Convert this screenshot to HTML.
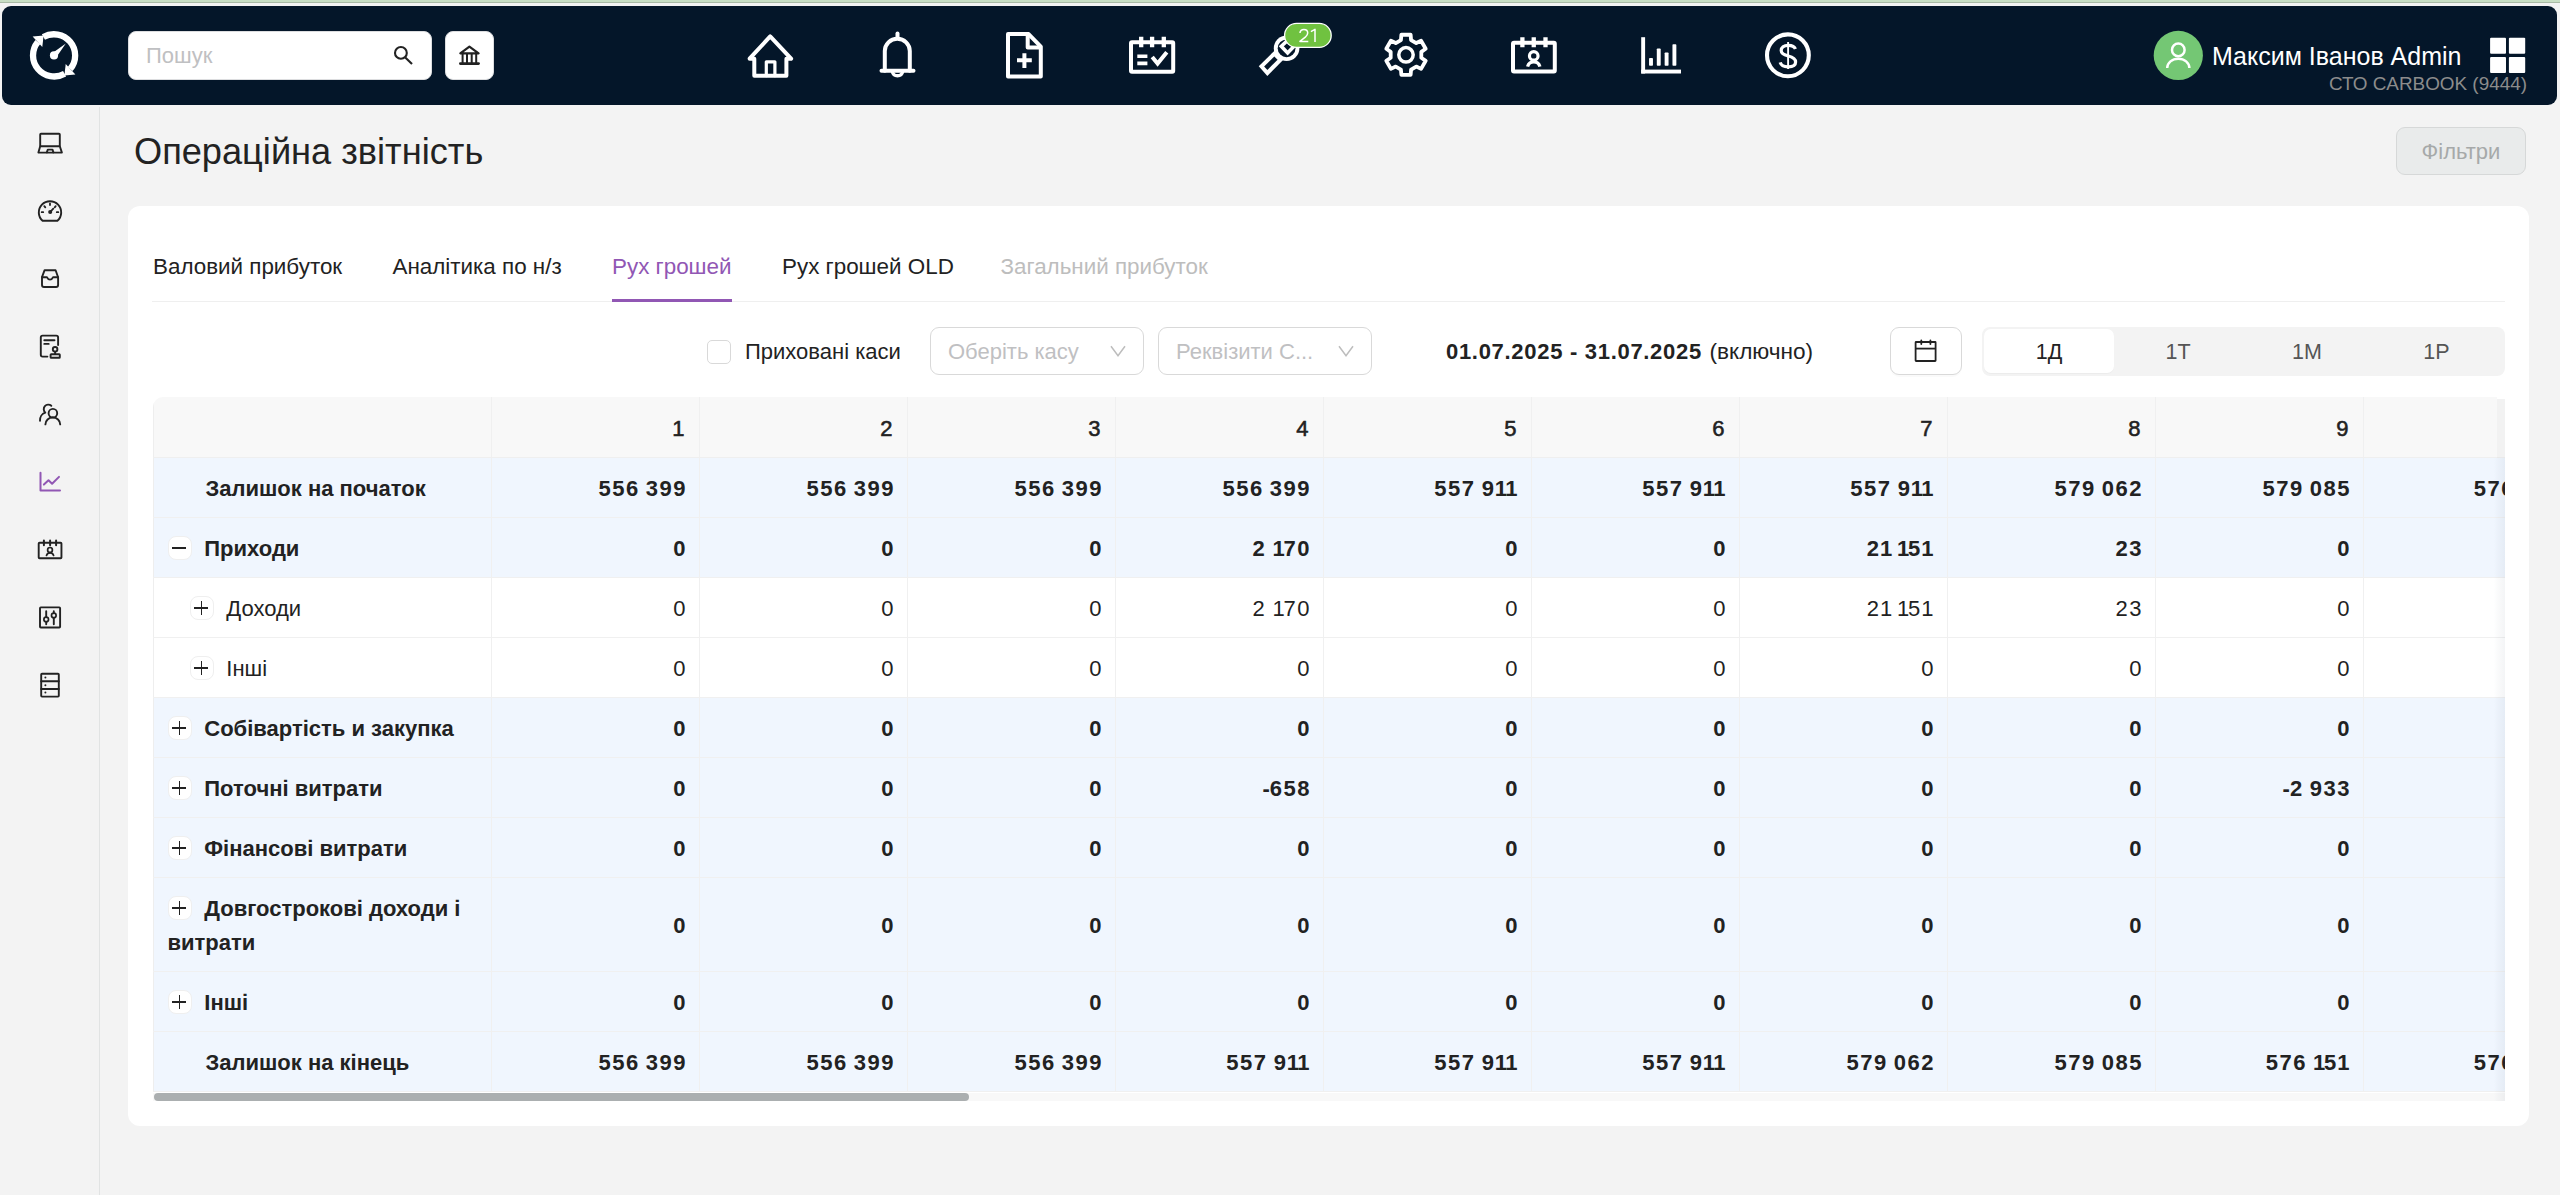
<!DOCTYPE html>
<html lang="uk">
<head>
<meta charset="utf-8">
<title>Операційна звітність</title>
<style>
*{box-sizing:border-box;margin:0;padding:0}
html,body{width:2560px;height:1195px;overflow:hidden}
body{position:relative;background:#f3f3f3;font-family:"Liberation Sans",sans-serif;color:#222;}
.abs{position:absolute}
.t{position:absolute;white-space:nowrap;line-height:1}
#topline{left:0;top:0;width:2560px;height:3px;background:#c8dec4;border-bottom:1px solid #a9baa6}
#nav{left:1.6px;top:6px;width:2555.2px;height:98.7px;background:#041629;border-radius:9px}
#search{left:128px;top:31px;width:304px;height:49px;background:#fff;border-radius:8px;border:1px solid #dcdddf}
#bankbtn{left:445px;top:31px;width:49px;height:49px;background:#fff;border-radius:8px;border:1px solid #dcdddf}
#sidebar-line{left:99px;top:107px;width:1px;height:1088px;background:#e1e3e3}
#filters{left:2396px;top:127px;width:130px;height:48px;background:#e9ebeb;border:1px solid #d6d8d8;border-radius:9px;color:#a6a9a9;font-size:22px;line-height:48px;text-align:center}
#card{left:128px;top:206px;width:2401px;height:920px;background:#fff;border-radius:12px}

.tab{top:256px;font-size:22.4px;color:#222}
.flt{top:340.8px;font-size:22px;color:#222}
.sel{top:327px;width:214.5px;height:48px;border:1.3px solid #d9d9d9;border-radius:9px;background:#fff}
.seg{top:341.7px;font-size:21.5px;color:#555;text-align:center}
#tbl{left:152.5px;top:397px;width:2352.5px;height:704px;overflow:hidden;border-radius:10px 0 0 0}
.hdr{position:absolute;left:0;top:0;height:61px;width:2420px;background:#f8f8f8;border-bottom:1px solid #efefef;display:flex}
.row{position:absolute;left:0;width:2420px;display:flex;border-bottom:1px solid #f0f0f0}
.row.blue{background:#f0f6fe}
.row.white{background:#fff}
.c0{width:339.5px;flex:none;border-right:1px solid #f0f0f0;border-left:1px solid #eeeeee;font-size:22px;line-height:34px;padding-top:14px;padding-right:14px;white-space:normal}
.cn{width:208px;flex:none;border-right:1px solid #f0f0f0;font-size:22px;text-align:right;padding-right:13.5px;display:flex;align-items:center;justify-content:flex-end}
.hdr .cn{font-weight:normal;-webkit-text-stroke:0.55px #222;padding-top:3px;padding-right:14.5px}
.row .cn{padding-top:2px}
.row.b{font-weight:bold}
.row.r{font-weight:normal}
.xb{display:inline-block;position:relative;width:24px;height:23.5px;background:#fff;border:1.3px solid #efefef;border-radius:8px;vertical-align:top;margin-top:4.3px;margin-right:12.8px}
.xb .mh{position:absolute;left:3.8px;top:9.7px;width:13.8px;height:1.9px;background:#222}
.xb .mv{position:absolute;left:10px;top:4.1px;width:1.9px;height:13.9px;background:#222}
.cn i{font-style:normal}.cn .a{letter-spacing:1.5px}.cn .b{letter-spacing:-1.2px}.cn .c{letter-spacing:0.9px}.cn .d{letter-spacing:-1.8px}
</style>
</head>
<body>
<div id="topline" class="abs"></div>
<div id="nav" class="abs"></div>
<div id="search" class="abs"></div>
<div id="bankbtn" class="abs"></div>
<div class="t" style="left:146px;top:45px;font-size:22px;color:#bfc0c2">Пошук</div>

<!-- NAV ICONS -->
<svg class="abs" style="left:0;top:0" width="2560" height="110" viewBox="0 0 2560 110" fill="none">
  <!-- logo -->
  <g stroke="#fff" stroke-width="6.3" fill="none">
    <path d="M64.6,73.7 A21.15,21.15 0 0 1 37.8,41.9" />
    <path d="M43.4,37.1 A21.15,21.15 0 0 1 70.2,69.0" />
  </g>
  <polygon fill="#fff" points="32.6,36.4 43.6,35.6 42.3,47" />
  <polygon fill="#fff" points="75.4,74.6 64.4,75.4 65.7,64" />
  <polygon fill="#fff" points="65.8,43.6 56.2,57.6 51.8,53.4" />
  <circle cx="54" cy="55.4" r="4.1" fill="#fff"/>

  <!-- search icon -->
  <g stroke="#222" stroke-width="2.1" fill="none">
    <circle cx="400.9" cy="52.9" r="5.9"/>
    <path d="M405.3,57.4 L412,64.1"/>
  </g>
  <!-- bank icon -->
  <g stroke="#222" fill="none">
    <path d="M460.3,53.3 L469.4,46.6 L478.6,53.3 Z" stroke-width="2.2" stroke-linejoin="round"/>
    <path d="M462.6,54 V63 M467,54 V63 M471.7,54 V63 M476.2,54 V63" stroke-width="2"/>
    <path d="M460.3,63.6 H478.6" stroke-width="2.6" stroke-linecap="round"/>
  </g>

  <!-- home -->
  <g stroke="#fff" stroke-width="4" fill="none" stroke-linejoin="round" stroke-linecap="round">
    <path d="M754.3,58.7 H749.6 L770.2,36.4 L791.1,58.7 H786.4 V75.7 H754.3 Z"/>
    <path d="M766.3,75.7 V61.8 H774.9 V75.7" stroke-width="3.2"/>
  </g>
  <!-- bell -->
  <g stroke="#fff" stroke-width="4" fill="none" stroke-linecap="round">
    <path d="M897.5,33.5 V37"/>
    <path d="M884.8,70.8 V51 A12.5,12.3 0 0 1 909.8,51 V70.8"/>
    <path d="M881.5,70.8 H913.5"/>
    <path d="M892.3,71.5 A5.3,5.3 0 0 0 902.7,71.5" stroke-width="3.4"/>
  </g>
  <!-- doc plus -->
  <g stroke="#fff" stroke-width="4" fill="none" stroke-linejoin="round">
    <path d="M1008,34.1 H1028.6 L1040.8,46.6 V76.6 H1008 Z"/>
    <path d="M1027.7,34.5 V47.4 H1040.5"/>
    <path d="M1017,60.2 H1031.8 M1024.4,53.2 V68"/>
  </g>
  <!-- calendar check -->
  <g stroke="#fff" stroke-width="4" fill="none">
    <rect x="1131" y="42.3" width="42.2" height="29.5" rx="1"/>
    <path d="M1141.2,36.8 V47.3 M1152.1,36.8 V47.3 M1163.8,36.8 V47.3" stroke-width="4.3"/>
    <path d="M1137.3,56.3 H1147.4 M1137.3,63.4 H1147.4" stroke-width="3.6"/>
    <path d="M1152.2,56.9 L1157.6,63.6 L1166.8,52.2" stroke-width="4"/>
  </g>
  <!-- wrench -->
  <g fill="#fff">
    <circle cx="1286.6" cy="48.3" r="12.8"/>
    <polygon points="1258.75,66.2 1267.3,75.9 1283.6,59.6 1275,50.2"/>
  </g>
  <g fill="#041629">
    <circle cx="1286.6" cy="48.3" r="8.9"/>
    <polygon points="1264.1,66.6 1267.4,69.9 1277.6,59.8 1274.3,56.4"/>
  </g>
  <path d="M1281.3,46.3 L1287.5,40.4 L1293.8,46.6 L1287.6,52.9 Z" stroke="#fff" stroke-width="3.6" fill="none"/>
  <!-- badge -->
  <rect x="1284.6" y="23.4" width="46.6" height="24" rx="12" fill="#70c240" stroke="#fff" stroke-width="1.3"/>
  <g stroke="#fff" stroke-width="1.5" fill="none" stroke-linejoin="round">
    <path d="M1300,33.1 C1300,30.8 1301.7,29.4 1303.9,29.4 C1306.1,29.4 1307.7,30.9 1307.7,32.9 C1307.7,34.6 1306.8,35.8 1305.3,37.2 L1299.9,41.4 H1308.3"/>
    <path d="M1310.9,31.7 L1315,29.4 V42.1"/>
  </g>
  <!-- gear -->
  <g stroke="#fff" stroke-width="3.8" fill="none" stroke-linejoin="round">
    <path d="M1400.92,40.05 L1401.37,34.73 L1410.63,34.73 L1411.08,40.05 L1416.23,43.03 L1421.07,40.75 L1425.70,48.78 L1421.31,51.82 L1421.31,57.78 L1425.70,60.82 L1421.07,68.85 L1416.23,66.57 L1411.08,69.55 L1410.63,74.87 L1401.37,74.87 L1400.92,69.55 L1395.77,66.57 L1390.93,68.85 L1386.30,60.82 L1390.69,57.78 L1390.69,51.82 L1386.30,48.78 L1390.93,40.75 L1395.77,43.03 Z"/>
    <circle cx="1406" cy="54.8" r="7.2" stroke-width="3.5"/>
  </g>
  <!-- calendar person -->
  <g stroke="#fff" stroke-width="4" fill="none">
    <rect x="1513" y="42.65" width="41.8" height="28.95" rx="1"/>
    <path d="M1522.4,37.2 V47.3 M1533.75,37.2 V47.3 M1545.5,37.2 V47.3" stroke-width="4.3"/>
    <circle cx="1533.75" cy="55.9" r="4.3" stroke-width="3.2"/>
    <path d="M1527.6,66.6 A6.4,6.4 0 0 1 1539.9,66.6" stroke-width="3.3"/>
  </g>
  <!-- bar chart -->
  <g fill="#fff">
    <rect x="1641.2" y="37.2" width="3.9" height="36.3"/>
    <rect x="1641.2" y="69.6" width="39.8" height="3.9"/>
    <rect x="1649.05" y="57.9" width="3.9" height="7.8" rx="0.8"/>
    <rect x="1656.8" y="48.5" width="3.9" height="17.2" rx="0.8"/>
    <rect x="1664.65" y="52.4" width="3.9" height="13.3" rx="0.8"/>
    <rect x="1672.45" y="44.2" width="3.9" height="21.5" rx="0.8"/>
  </g>
  <!-- dollar -->
  <g stroke="#fff" fill="none">
    <circle cx="1787.9" cy="55.3" r="20.9" stroke-width="4.1"/>
    <path d="M1795.4,49 C1794.6,46.6 1791.8,45.4 1788.2,45.4 C1783.8,45.4 1781.2,47.6 1781.2,50.6 C1781.2,54 1784.3,55 1788.2,56 C1792.6,57.1 1795.6,58.4 1795.6,62 C1795.6,65.1 1792.6,66.8 1788.2,66.8 C1784,66.8 1781,65.3 1780.2,62.4" stroke-width="3.2"/>
    <path d="M1788.1,42 V69" stroke-width="1.9"/>
  </g>
  <!-- avatar -->
  <circle cx="2178.3" cy="55.4" r="24.6" fill="#74c774"/>
  <g stroke="#fff" stroke-width="2.5" fill="none">
    <circle cx="2178.3" cy="49.9" r="6.3"/>
    <path d="M2167.2,68 A11.1,9.4 0 0 1 2189.4,68"/>
  </g>
  <!-- grid -->
  <g fill="#fff">
    <rect x="2490.1" y="37.8" width="15.9" height="15.9" rx="1"/>
    <rect x="2508.9" y="37.8" width="16.3" height="15.9" rx="1"/>
    <rect x="2490.1" y="57" width="15.9" height="16" rx="1"/>
    <rect x="2508.9" y="57" width="16.3" height="16" rx="1"/>
  </g>
</svg>
<div class="t" style="left:2212px;top:43.8px;font-size:25px;color:#fff">Максим Іванов Admin</div>
<div class="t" style="left:2329px;top:74.6px;font-size:18.9px;color:#8c8c8c">СТО CARBOOK (9444)</div>

<!-- SIDEBAR -->
<div id="sidebar-line" class="abs"></div>
<svg class="abs" style="left:0;top:100px" width="99" height="620" viewBox="0 100 99 620" fill="none">
  <g stroke="#222" stroke-width="1.9" fill="none" stroke-linejoin="round" stroke-linecap="round">
    <!-- laptop -->
    <rect x="40.2" y="133.8" width="19.6" height="12.5" rx="0.8"/>
    <path d="M40.2,146.3 L38.4,152.6 H61.9 L59.8,146.3"/>
    <path d="M46.8,152.4 L47.8,149.6 H52.5 L53.4,152.4"/>
    <!-- gauge -->
    <path d="M42.6,220.8 A11.2,11.2 0 1 1 57.4,220.8 Z"/>
    <path d="M50,203.3 V205 M44.3,206.2 L45.3,207.3 M55.7,206.2 L54.7,207.3 M41.7,212.2 H43.2 M56.8,212.2 H58.3" stroke-width="1.8"/>
    <path d="M50.2,212 L53.3,208.6" stroke-width="1.8"/>
    <circle cx="50.2" cy="212" r="1.1" fill="#222"/>
    <!-- inbox -->
    <path d="M42,277.2 L44.6,270.2 H55.6 L58.1,277.2"/>
    <path d="M42,277.2 V285 Q42,287 44,287 H56.1 Q58.1,287 58.1,285 V277.2 H53.1 Q52,279.6 50,279.6 Q48,279.6 46.9,277.2 Z"/>
    <!-- doc stamp -->
    <path d="M47.4,356.6 H42.6 Q40.8,356.6 40.8,354.8 V337.4 Q40.8,335.6 42.6,335.6 H56.3 Q58.1,335.6 58.1,337.4 V345"/>
    <path d="M44.3,340.2 H54.5 M44.3,343.9 H48.7"/>
    <circle cx="55.1" cy="349.3" r="2.3"/>
    <path d="M55.1,351.6 V354"/>
    <rect x="50.6" y="354.2" width="9.2" height="3.6" rx="0.6"/>
    <!-- people -->
    <circle cx="52.9" cy="413.2" r="4.3"/>
    <path d="M45.4,424.4 A7.4,7 0 0 1 60.2,424.4"/>
    <path d="M51.3,405.8 A4.4,4.4 0 1 0 45.3,412.6 A7.5,8 0 0 0 40,420.8"/>
  </g>
  <!-- chart purple -->
  <g stroke="#9157b4" stroke-width="2" fill="none" stroke-linejoin="round" stroke-linecap="round">
    <path d="M40.5,472.8 V490.5 H60"/>
    <path d="M43.9,484.6 L48.5,480.3 L52.1,483.8 L59,476.9"/>
  </g>
  <g stroke="#222" stroke-width="1.9" fill="none" stroke-linejoin="round" stroke-linecap="round">
    <!-- cal person -->
    <rect x="38.7" y="542.7" width="22.75" height="15.5" rx="0.8"/>
    <path d="M43.9,540.6 V545.3 M50.1,540.6 V545.3 M56.1,540.6 V545.3" stroke-width="2"/>
    <circle cx="50" cy="549.9" r="2.4" stroke-width="1.7"/>
    <path d="M46.5,555.4 A3.7,3.5 0 0 1 53.6,555.4" stroke-width="1.7"/>
    <!-- sliders -->
    <rect x="40" y="607.4" width="20.1" height="20.1" rx="0.8"/>
    <path d="M46.2,611.3 V617.2 M46.2,621.8 V624.2 M53.8,611.3 V613.2 M53.8,617.8 V624.2"/>
    <circle cx="46.2" cy="619.5" r="2.3" stroke-width="1.7"/>
    <circle cx="53.8" cy="615.5" r="2.3" stroke-width="1.7"/>
    <!-- server -->
    <rect x="41.2" y="673.8" width="17.6" height="22.8" rx="0.8"/>
    <path d="M41.2,681.3 H58.8 M41.2,689 H58.8"/>
  </g>
  <g fill="#222">
    <circle cx="45.4" cy="677.6" r="1"/>
    <circle cx="45.4" cy="685.3" r="1"/>
    <circle cx="45.4" cy="692.6" r="1"/>
  </g>
</svg>

<!-- TITLE -->
<div class="t" style="left:134px;top:134px;font-size:36.2px;color:#222">Операційна звітність</div>
<div id="filters" class="abs">Фільтри</div>

<!-- CARD -->
<div id="card" class="abs"></div>

<!-- TABS -->
<div class="t tab" style="left:153px">Валовий прибуток</div>
<div class="t tab" style="left:392.5px">Аналітика по н/з</div>
<div class="t tab" style="left:612px;color:#9157b4">Рух грошей</div>
<div class="t tab" style="left:782px">Рух грошей OLD</div>
<div class="t tab" style="left:1000.5px;color:#bdbdbd">Загальний прибуток</div>
<div class="abs" style="left:152px;top:300.5px;width:2353px;height:1.5px;background:#efefef"></div>
<div class="abs" style="left:612px;top:298.8px;width:120px;height:3px;background:#9157b4"></div>

<!-- FILTER ROW -->
<div class="abs" style="left:707px;top:339.5px;width:24px;height:24px;border:1.3px solid #d9d9d9;border-radius:5px;background:#fff"></div>
<div class="t flt" style="left:745px">Приховані каси</div>
<div class="abs sel" style="left:929.5px"></div>
<div class="t flt" style="left:948px;color:#bfc0c2">Оберіть касу</div>
<svg class="abs" style="left:1108px;top:343px" width="20" height="16" viewBox="0 0 20 16"><path d="M3,3.2 L10,12.8 L17,3.2" stroke="#bdbdbd" stroke-width="1.5" fill="none"/></svg>
<div class="abs sel" style="left:1157.5px"></div>
<div class="t flt" style="left:1176px;color:#bfc0c2">Реквізити С...</div>
<svg class="abs" style="left:1336px;top:343px" width="20" height="16" viewBox="0 0 20 16"><path d="M3,3.2 L10,12.8 L17,3.2" stroke="#bdbdbd" stroke-width="1.5" fill="none"/></svg>
<div class="t flt" style="left:1446px;color:#222"><b style="letter-spacing:0.7px">01.07.2025 - 31.07.2025</b> <span style="font-size:22.6px;margin-left:1.5px">(включно)</span></div>
<div class="abs" style="left:1889.5px;top:327px;width:72.5px;height:48px;border:1.3px solid #d9d9d9;border-radius:9px;background:#fff;box-shadow:0 2px 0 rgba(0,0,0,0.02)"></div>
<svg class="abs" style="left:1910px;top:336px" width="32" height="30" viewBox="1910 336 32 30" fill="none" stroke="#222" stroke-width="1.8">
  <rect x="1915.6" y="342" width="20" height="19" rx="0.5"/>
  <path d="M1915.6,348.6 H1935.6"/>
  <path d="M1921.3,340.5 V344 M1930.4,340.5 V344" stroke-linecap="round"/>
</svg>
<div class="abs" style="left:1982px;top:326.5px;width:523px;height:49px;background:#f3f3f3;border-radius:8px"></div>
<div class="abs" style="left:1984px;top:329.2px;width:129.5px;height:44.2px;background:#fff;border-radius:7px;box-shadow:0 1px 1px rgba(0,0,0,0.03)"></div>
<div class="t seg" style="left:1984px;width:130px;color:#222">1Д</div>
<div class="t seg" style="left:2113px;width:130px">1Т</div>
<div class="t seg" style="left:2242px;width:130px">1М</div>
<div class="t seg" style="left:2371.5px;width:130px">1Р</div>

<!-- TABLE -->
<div id="tbl" class="abs">
<div class="hdr"><div class="c0"></div><div class="cn"><span>1</span></div><div class="cn"><span>2</span></div><div class="cn"><span>3</span></div><div class="cn"><span>4</span></div><div class="cn"><span>5</span></div><div class="cn"><span>6</span></div><div class="cn"><span>7</span></div><div class="cn"><span>8</span></div><div class="cn"><span>9</span></div><div class="cn"><span>10</span></div></div>
<div class="row blue b" style="top:61px;height:60px"><div class="c0" style="padding-left:52px">Залишок на початок</div><div class="cn"><span><i class="a">5</i><i class="a">5</i><i class="a">6</i> <i class="a">3</i><i class="a">9</i>9</span></div><div class="cn"><span><i class="a">5</i><i class="a">5</i><i class="a">6</i> <i class="a">3</i><i class="a">9</i>9</span></div><div class="cn"><span><i class="a">5</i><i class="a">5</i><i class="a">6</i> <i class="a">3</i><i class="a">9</i>9</span></div><div class="cn"><span><i class="a">5</i><i class="a">5</i><i class="a">6</i> <i class="a">3</i><i class="a">9</i>9</span></div><div class="cn"><span><i class="a">5</i><i class="a">5</i><i class="a">7</i> <i class="c">9</i><i class="d">1</i>1</span></div><div class="cn"><span><i class="a">5</i><i class="a">5</i><i class="a">7</i> <i class="c">9</i><i class="d">1</i>1</span></div><div class="cn"><span><i class="a">5</i><i class="a">5</i><i class="a">7</i> <i class="c">9</i><i class="d">1</i>1</span></div><div class="cn"><span><i class="a">5</i><i class="a">7</i><i class="a">9</i> <i class="a">0</i><i class="a">6</i>2</span></div><div class="cn"><span><i class="a">5</i><i class="a">7</i><i class="a">9</i> <i class="a">0</i><i class="a">8</i>5</span></div><div class="cn"><span><i class="a">5</i><i class="a">7</i><i class="a">6</i> <i class="b">1</i><i class="c">5</i>1</span></div></div>
<div class="row blue b" style="top:121px;height:60px"><div class="c0" style="padding-left:14px"><span class="xb"><i class="mh"></i></span>Приходи</div><div class="cn"><span>0</span></div><div class="cn"><span>0</span></div><div class="cn"><span>0</span></div><div class="cn"><span><i class="a">2</i> <i class="b">1</i><i class="a">7</i>0</span></div><div class="cn"><span>0</span></div><div class="cn"><span>0</span></div><div class="cn"><span><i class="c">2</i><i class="b">1</i> <i class="b">1</i><i class="c">5</i>1</span></div><div class="cn"><span><i class="a">2</i>3</span></div><div class="cn"><span>0</span></div><div class="cn"></div></div>
<div class="row white r" style="top:181px;height:60px"><div class="c0" style="padding-left:36px"><span class="xb"><i class="mh"></i><i class="mv"></i></span>Доходи</div><div class="cn"><span>0</span></div><div class="cn"><span>0</span></div><div class="cn"><span>0</span></div><div class="cn"><span><i class="a">2</i> <i class="b">1</i><i class="a">7</i>0</span></div><div class="cn"><span>0</span></div><div class="cn"><span>0</span></div><div class="cn"><span><i class="c">2</i><i class="b">1</i> <i class="b">1</i><i class="c">5</i>1</span></div><div class="cn"><span><i class="a">2</i>3</span></div><div class="cn"><span>0</span></div><div class="cn"></div></div>
<div class="row white r" style="top:241px;height:60px"><div class="c0" style="padding-left:36px"><span class="xb"><i class="mh"></i><i class="mv"></i></span>Інші</div><div class="cn"><span>0</span></div><div class="cn"><span>0</span></div><div class="cn"><span>0</span></div><div class="cn"><span>0</span></div><div class="cn"><span>0</span></div><div class="cn"><span>0</span></div><div class="cn"><span>0</span></div><div class="cn"><span>0</span></div><div class="cn"><span>0</span></div><div class="cn"></div></div>
<div class="row blue b" style="top:301px;height:60px"><div class="c0" style="padding-left:14px"><span class="xb"><i class="mh"></i><i class="mv"></i></span>Собівартість и закупка</div><div class="cn"><span>0</span></div><div class="cn"><span>0</span></div><div class="cn"><span>0</span></div><div class="cn"><span>0</span></div><div class="cn"><span>0</span></div><div class="cn"><span>0</span></div><div class="cn"><span>0</span></div><div class="cn"><span>0</span></div><div class="cn"><span>0</span></div><div class="cn"></div></div>
<div class="row blue b" style="top:361px;height:60px"><div class="c0" style="padding-left:14px"><span class="xb"><i class="mh"></i><i class="mv"></i></span>Поточні витрати</div><div class="cn"><span>0</span></div><div class="cn"><span>0</span></div><div class="cn"><span>0</span></div><div class="cn"><span>-<i class="a">6</i><i class="a">5</i>8</span></div><div class="cn"><span>0</span></div><div class="cn"><span>0</span></div><div class="cn"><span>0</span></div><div class="cn"><span>0</span></div><div class="cn"><span>-<i class="a">2</i> <i class="a">9</i><i class="a">3</i>3</span></div><div class="cn"></div></div>
<div class="row blue b" style="top:421px;height:60px"><div class="c0" style="padding-left:14px"><span class="xb"><i class="mh"></i><i class="mv"></i></span>Фінансові витрати</div><div class="cn"><span>0</span></div><div class="cn"><span>0</span></div><div class="cn"><span>0</span></div><div class="cn"><span>0</span></div><div class="cn"><span>0</span></div><div class="cn"><span>0</span></div><div class="cn"><span>0</span></div><div class="cn"><span>0</span></div><div class="cn"><span>0</span></div><div class="cn"></div></div>
<div class="row blue b" style="top:481px;height:94px"><div class="c0" style="padding-left:14px"><span class="xb"><i class="mh"></i><i class="mv"></i></span>Довгострокові доходи і витрати</div><div class="cn"><span>0</span></div><div class="cn"><span>0</span></div><div class="cn"><span>0</span></div><div class="cn"><span>0</span></div><div class="cn"><span>0</span></div><div class="cn"><span>0</span></div><div class="cn"><span>0</span></div><div class="cn"><span>0</span></div><div class="cn"><span>0</span></div><div class="cn"></div></div>
<div class="row blue b" style="top:575px;height:60px"><div class="c0" style="padding-left:14px"><span class="xb"><i class="mh"></i><i class="mv"></i></span>Інші</div><div class="cn"><span>0</span></div><div class="cn"><span>0</span></div><div class="cn"><span>0</span></div><div class="cn"><span>0</span></div><div class="cn"><span>0</span></div><div class="cn"><span>0</span></div><div class="cn"><span>0</span></div><div class="cn"><span>0</span></div><div class="cn"><span>0</span></div><div class="cn"></div></div>
<div class="row blue b" style="top:635px;height:60px"><div class="c0" style="padding-left:52px">Залишок на кінець</div><div class="cn"><span><i class="a">5</i><i class="a">5</i><i class="a">6</i> <i class="a">3</i><i class="a">9</i>9</span></div><div class="cn"><span><i class="a">5</i><i class="a">5</i><i class="a">6</i> <i class="a">3</i><i class="a">9</i>9</span></div><div class="cn"><span><i class="a">5</i><i class="a">5</i><i class="a">6</i> <i class="a">3</i><i class="a">9</i>9</span></div><div class="cn"><span><i class="a">5</i><i class="a">5</i><i class="a">7</i> <i class="c">9</i><i class="d">1</i>1</span></div><div class="cn"><span><i class="a">5</i><i class="a">5</i><i class="a">7</i> <i class="c">9</i><i class="d">1</i>1</span></div><div class="cn"><span><i class="a">5</i><i class="a">5</i><i class="a">7</i> <i class="c">9</i><i class="d">1</i>1</span></div><div class="cn"><span><i class="a">5</i><i class="a">7</i><i class="a">9</i> <i class="a">0</i><i class="a">6</i>2</span></div><div class="cn"><span><i class="a">5</i><i class="a">7</i><i class="a">9</i> <i class="a">0</i><i class="a">8</i>5</span></div><div class="cn"><span><i class="a">5</i><i class="a">7</i><i class="a">6</i> <i class="b">1</i><i class="c">5</i>1</span></div><div class="cn"><span><i class="a">5</i><i class="a">7</i><i class="a">6</i> <i class="b">1</i><i class="c">5</i>1</span></div></div>
<div class="abs" style="left:0;top:695.5px;width:2352.5px;height:8.5px;background:#f8f8f8"></div>
<div class="abs" style="left:1.5px;top:696px;width:815px;height:8px;background:#abafb0;border-radius:4px"></div>
<div class="abs" style="left:2344.5px;top:0;width:8px;height:1.8px;background:#fff"></div>
<div class="abs" style="left:2344.5px;top:1.8px;width:8px;height:59.2px;background:rgba(0,0,0,0.022)"></div>
<div class="abs" style="left:2341.5px;top:61px;width:11px;height:643px;background:linear-gradient(to right, rgba(30,50,80,0), rgba(30,50,80,0.02) 30%, rgba(30,50,80,0.05))"></div>
</div>
</body>
</html>
